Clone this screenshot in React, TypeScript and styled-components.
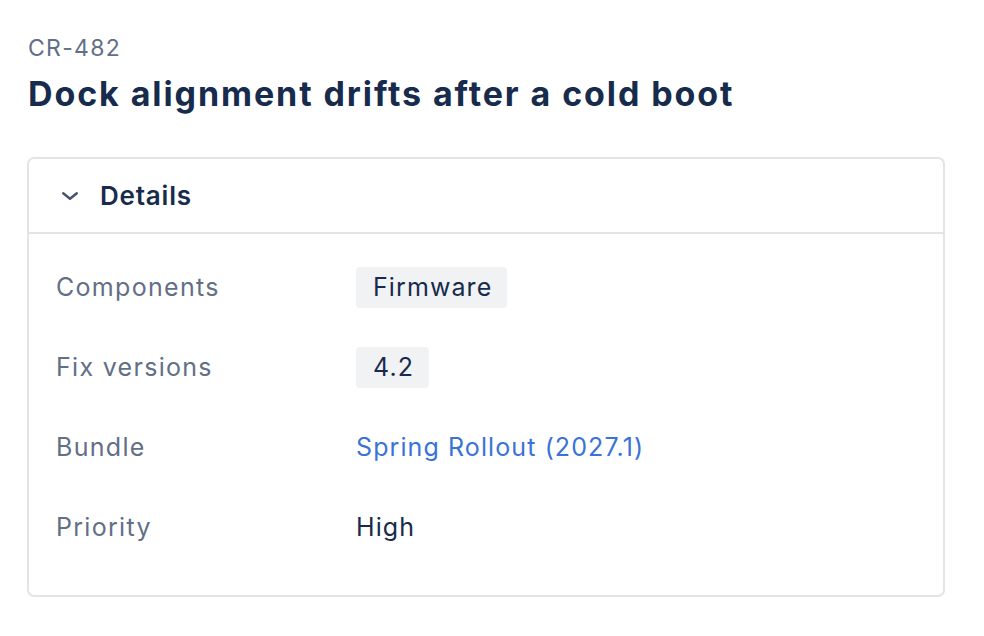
import React from "react";
import styled, { createGlobalStyle } from "styled-components";

const Global = createGlobalStyle`
  html, body { margin: 0; padding: 0; background: #ffffff; }
  body { font-family: Inter, "Noto Sans", sans-serif; -webkit-font-smoothing: antialiased; }
`;

const Page = styled.main`
  padding: 34px 39px 0 27px;
  display: flex;
  flex-direction: column;
`;

const IssueKey = styled.div`
  font-size: 23px;
  line-height: 28px;
  color: #626f86;
  padding-left: 1px;
  letter-spacing: 1.3px;
`;

const Title = styled.h1`
  margin: 10px 0 0 1px;
  font-size: 34px;
  line-height: 44px;
  font-weight: 700;
  color: #172b4d;
  letter-spacing: 1.9px;
`;

const Card = styled.section`
  margin-top: 41px;
  width: 918px;
  box-sizing: border-box;
  border: 2px solid #e3e4e6;
  border-radius: 7px;
`;

const Header = styled.button`
  all: unset;
  box-sizing: border-box;
  width: 100%;
  height: 75px;
  display: flex;
  align-items: center;
  gap: 21px;
  padding-left: 32px;
  border-bottom: 2px solid #e3e4e6;
  cursor: pointer;
`;

const HeaderLabel = styled.span`
  font-size: 26px;
  font-weight: 600;
  color: #172b4d;
  letter-spacing: 0.8px;
`;

const Rows = styled.dl`
  margin: 0;
  padding: 13px 0 28px 27px;
  display: grid;
  grid-template-columns: 300px 1fr;
  grid-auto-rows: 80px;
  align-items: center;
`;

const Label = styled.dt`
  font-size: 25px;
  color: #626f86;
  letter-spacing: 1.3px;
`;

const Value = styled.dd`
  margin: 0;
  font-size: 25px;
  color: #172b4d;
  display: flex;
  letter-spacing: 1.1px;
`;

const Tag = styled.span`
  background: #f1f2f4;
  border-radius: 4px;
  padding: 5px 15px 6px 17px;
  line-height: 30px;
`;

const Link = styled.a`
  color: #3a73d6;
  text-decoration: none;
`;

const Chevron = () => (
  <svg width="18" height="18" viewBox="0 0 18 18" fill="none">
    <path d="M2.2 6.2l6.8 5.6 6.8-5.6" stroke="#44546f" strokeWidth="2.4" strokeLinecap="round" strokeLinejoin="round" />
  </svg>
);

export default function App() {
  return (
    <>
      <Global />
      <Page>
        <IssueKey>CR-482</IssueKey>
        <Title>Dock alignment drifts after a cold boot</Title>
        <Card>
          <Header>
            <Chevron />
            <HeaderLabel>Details</HeaderLabel>
          </Header>
          <Rows>
            <Label>Components</Label>
            <Value><Tag>Firmware</Tag></Value>
            <Label>Fix versions</Label>
            <Value><Tag>4.2</Tag></Value>
            <Label>Bundle</Label>
            <Value><Link href="#">Spring Rollout (2027.1)</Link></Value>
            <Label>Priority</Label>
            <Value>High</Value>
          </Rows>
        </Card>
      </Page>
    </>
  );
}
